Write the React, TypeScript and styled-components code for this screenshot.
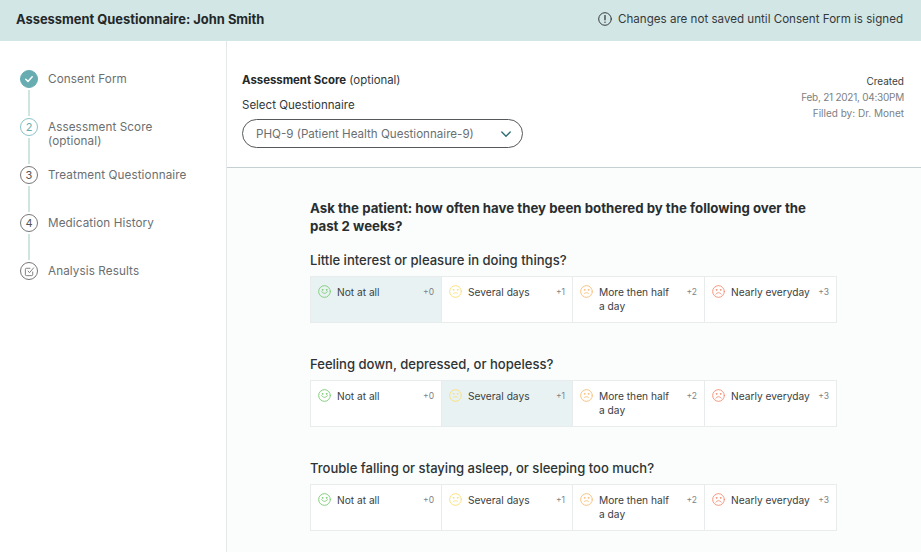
import React from 'react';
import styled, { createGlobalStyle } from 'styled-components';

const Global = createGlobalStyle`
  html, body { margin: 0; padding: 0; background: #fff; }
  body { font-family: Inter, "Open Sans", "Liberation Sans", sans-serif; color: #2f3335; }
  * { box-sizing: border-box; }
`;

const Page = styled.div`
  width: 921px;
  height: 552px;
  overflow: hidden;
  display: flex;
  flex-direction: column;
`;

const Header = styled.header`
  height: 41px;
  flex: none;
  background: #d3e6e6;
  display: flex;
  align-items: center;
  justify-content: space-between;
  padding: 0 18px 3px 16px;
`;

const Title = styled.h1`
  margin: 0;
  font-size: 12.9px;
  font-weight: 700;
  color: #23282a;
`;

const Notice = styled.div`
  display: flex;
  align-items: center;
  gap: 6px;
  font-size: 11.6px;
  color: #34393b;
`;

const Body = styled.div`
  flex: 1;
  display: flex;
  min-height: 0;
`;

const Sidebar = styled.nav`
  width: 227px;
  flex: none;
  border-right: 1px solid #e4e8e8;
  padding: 29px 0 0 20px;
`;

const Step = styled.div`
  display: flex;
  gap: 10px;
  height: 48px;
`;

const Rail = styled.div`
  width: 18px;
  flex: none;
  display: flex;
  flex-direction: column;
  align-items: center;
`;

const Circle = styled.div<{ $kind: 'done' | 'active' | 'idle' }>`
  width: 18px;
  height: 18px;
  flex: none;
  border-radius: 50%;
  display: flex;
  align-items: center;
  justify-content: center;
  font-size: 11px;
  background: ${p => (p.$kind === 'done' ? '#66acb1' : '#fff')};
  color: ${p => (p.$kind === 'active' ? '#66acb1' : '#555')};
  border: 1px solid ${p => (p.$kind === 'active' ? '#8cc3c7' : p.$kind === 'idle' ? '#777' : '#66acb1')};
`;

const Line = styled.div`
  flex: 1;
  width: 1.5px;
  margin: 2px 0;
  background: #cfe5e0;
`;

const StepLabel = styled.div`
  max-width: 145px;
  font-size: 11.7px;
  line-height: 14px;
  color: #6b6f71;
  padding-top: 2px;
  letter-spacing: 0.1px;
`;

const Main = styled.main`
  flex: 1;
  display: flex;
  flex-direction: column;
  min-width: 0;
`;

const Top = styled.section`
  height: 127px;
  flex: none;
  background: #fff;
  border-bottom: 1px solid #c4cfd2;
  padding: 32px 17px 0 15px;
  display: flex;
  justify-content: space-between;
`;

const ScoreTitle = styled.div`
  font-size: 11.4px;
  line-height: 14px;
  color: #33383a;
  b { font-weight: 700; color: #23282a; }
`;

const SelectLabel = styled.div`
  font-size: 11.5px;
  line-height: 14px;
  margin-top: 11px;
  color: #33383a;
`;

const Select = styled.div`
  width: 281px;
  height: 29px;
  margin-top: 7px;
  border: 1px solid #55595b;
  border-radius: 15px;
  display: flex;
  align-items: center;
  justify-content: space-between;
  padding: 0 10px 0 13px;
  font-size: 11.6px;
  color: #6b6f71;
`;

const Meta = styled.div`
  text-align: right;
  font-size: 10px;
  line-height: 16px;
  color: #7d8183;
`;

const MetaHead = styled.div`
  color: #3a3f41;
`;

const MetaDate = styled.div`
  letter-spacing: -0.25px;
`;

const Content = styled.section`
  flex: 1;
  background: #fafdfc;
  padding: 31px 0 0 83px;
  min-height: 0;
`;

const Ask = styled.h2`
  margin: 0 0 16px;
  width: 510px;
  font-size: 13.25px;
  line-height: 18px;
  font-weight: 700;
  color: #2a2e30;
`;

const Question = styled.div`
  margin-bottom: 32px;
`;

const QuestionTitle = styled.h3`
  margin: 0 0 7px;
  font-size: 13.05px;
  line-height: 18px;
  font-weight: 500;
  color: #2f3335;
`;

const Options = styled.div`
  width: 527px;
  height: 47px;
  display: grid;
  grid-template-columns: 130px 131px 132px 132px;
  border: 1px solid #e8ecec;
  background: #fff;
`;

const Option = styled.div<{ $selected?: boolean }>`
  display: flex;
  gap: 6px;
  padding: 8px 7px 0 7px;
  background: ${p => (p.$selected ? '#e9f2f2' : '#fff')};
  & + & { border-left: 1px solid #e8ecec; }
`;

const OptionText = styled.div`
  flex: 1;
  font-size: 10.2px;
  line-height: 14px;
  color: #3b4042;
`;

const Points = styled.span`
  font-size: 8.5px;
  line-height: 14px;
  color: #7f8385;
`;

const FaceIcon = styled.svg`
  flex: none;
  width: 13px;
  height: 13px;
  fill: none;
  stroke-width: 1.2;
  stroke-linecap: round;
`;

type Mood = { color: string; mouth: string };

const moods: Mood[] = [
  { color: '#7fcf7a', mouth: 'M4.6 8.2c.8 1.4 1.9 2 3.4 2s2.6-.6 3.4-2' },
  { color: '#f8e07f', mouth: 'M5.2 10.6c.8-.8 1.7-1.1 2.8-1.1s2 .3 2.8 1.1' },
  { color: '#fbc07e', mouth: 'M5.2 10.6c.8-.8 1.7-1.1 2.8-1.1s2 .3 2.8 1.1' },
  { color: '#f59478', mouth: 'M4.8 11.2c.8-1.1 1.9-1.7 3.2-1.7s2.4.6 3.2 1.7' },
];

const Face: React.FC<{ mood: Mood }> = ({ mood }) => (
  <FaceIcon viewBox="0 0 16 16" stroke={mood.color}>
    <circle cx="8" cy="8" r="7.2" />
    <circle cx="5.5" cy="6" r=".5" fill={mood.color} />
    <circle cx="10.5" cy="6" r=".5" fill={mood.color} />
    <path d={mood.mouth} />
  </FaceIcon>
);

const answers = ['Not at all', 'Several days', 'More then half a\u00a0day', 'Nearly everyday'];

const questions = [
  { text: 'Little interest or pleasure in doing things?', selected: 0 },
  { text: 'Feeling down, depressed, or hopeless?', selected: 1 },
  { text: 'Trouble falling or staying asleep, or sleeping too much?', selected: -1 },
];

const steps = [
  { label: 'Consent Form', kind: 'done' as const, mark: 'check' },
  { label: 'Assessment Score (optional)', kind: 'active' as const, mark: '2' },
  { label: 'Treatment Questionnaire', kind: 'idle' as const, mark: '3' },
  { label: 'Medication History', kind: 'idle' as const, mark: '4' },
  { label: 'Analysis Results', kind: 'idle' as const, mark: 'edit' },
];

const StepMark: React.FC<{ mark: string }> = ({ mark }) => {
  if (mark === 'check') {
    return (
      <svg width="10" height="10" viewBox="0 0 10 10" fill="none" stroke="#fff" strokeWidth="1.5" strokeLinecap="round" strokeLinejoin="round">
        <path d="M1.8 5.3l2.2 2.1 4.2-4.6" />
      </svg>
    );
  }
  if (mark === 'edit') {
    return (
      <svg width="11" height="11" viewBox="0 0 12 12" fill="none" stroke="#777" strokeWidth="1" strokeLinecap="round" strokeLinejoin="round">
        <path d="M9.5 6.5v3a1 1 0 0 1-1 1h-6a1 1 0 0 1-1-1v-6a1 1 0 0 1 1-1h4" />
        <path d="M4.5 5.5l1.5 1.8 4.5-5.3" />
      </svg>
    );
  }
  return <>{mark}</>;
};

const App: React.FC = () => (
  <Page>
    <Global />
    <Header>
      <Title>Assessment Questionnaire: John Smith</Title>
      <Notice>
        <svg width="14" height="14" viewBox="0 0 14 14" fill="none" stroke="#34393b" strokeWidth="1" strokeLinecap="round">
          <circle cx="7" cy="7" r="6.3" />
          <path d="M7 3.6v4.2" strokeWidth="1.3" />
          <path d="M7 10.1v.2" strokeWidth="1.4" />
        </svg>
        Changes are not saved until Consent Form is signed
      </Notice>
    </Header>
    <Body>
      <Sidebar>
        {steps.map((step, i) => (
          <Step key={step.label}>
            <Rail>
              <Circle $kind={step.kind}>
                <StepMark mark={step.mark} />
              </Circle>
              {i < steps.length - 1 && <Line />}
            </Rail>
            <StepLabel>{step.label}</StepLabel>
          </Step>
        ))}
      </Sidebar>
      <Main>
        <Top>
          <div>
            <ScoreTitle><b>Assessment Score</b> (optional)</ScoreTitle>
            <SelectLabel>Select Questionnaire</SelectLabel>
            <Select>
              PHQ-9 (Patient Health Questionnaire-9)
              <svg width="12" height="12" viewBox="0 0 12 12" fill="none" stroke="#2f6f75" strokeWidth="1.4" strokeLinecap="round" strokeLinejoin="round">
                <path d="M1.8 4l4.2 4.2L10.2 4" />
              </svg>
            </Select>
          </div>
          <Meta>
            <MetaHead>Created</MetaHead>
            <MetaDate>Feb, 21 2021, 04:30PM</MetaDate>
            <div>Filled by: Dr. Monet</div>
          </Meta>
        </Top>
        <Content>
          <Ask>Ask the patient: how often have they been bothered by the following over the past 2 weeks?</Ask>
          {questions.map(q => (
            <Question key={q.text}>
              <QuestionTitle>{q.text}</QuestionTitle>
              <Options>
                {answers.map((answer, i) => (
                  <Option key={answer} $selected={q.selected === i}>
                    <Face mood={moods[i]} />
                    <OptionText>{answer}</OptionText>
                    <Points>+{i}</Points>
                  </Option>
                ))}
              </Options>
            </Question>
          ))}
        </Content>
      </Main>
    </Body>
  </Page>
);

export default App;
